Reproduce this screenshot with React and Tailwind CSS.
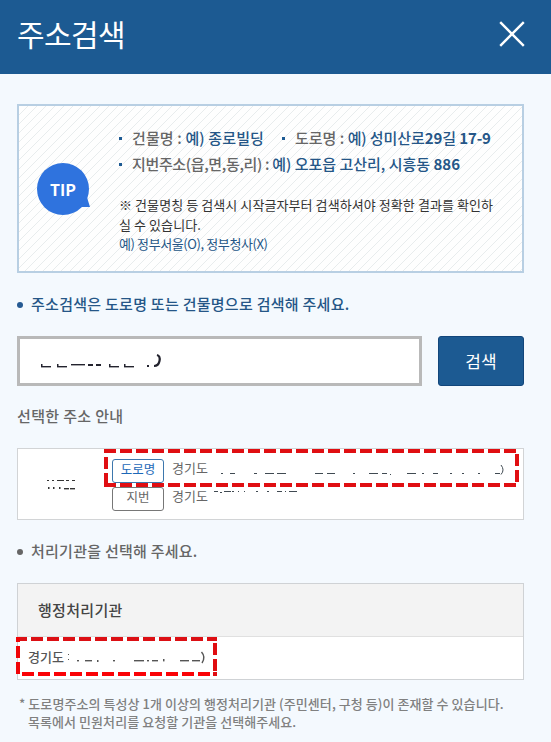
import React from 'react';

const INK = '#404a52';

function CloseIcon() {
  return (
    <svg width="26" height="26" viewBox="0 0 26 26" fill="none" stroke="#fff" strokeWidth="2.4">
      <path d="M1.2 1.2 24.8 24.8M24.8 1.2 1.2 24.8" />
    </svg>
  );
}

function Stripes() {
  return (
    <svg className="absolute inset-0 h-full w-full" aria-hidden="true">
      <defs>
        <pattern id="stripes" width="9" height="9" patternUnits="userSpaceOnUse">
          <path d="M-1 10 10 -1M-1 1 1 -1M8 10 10 8" stroke="#e8eced" strokeWidth="1" />
        </pattern>
      </defs>
      <rect width="100%" height="100%" fill="url(#stripes)" />
    </svg>
  );
}

function TipBadge() {
  return (
    <div className="relative h-[52px] w-[53px] shrink-0">
      <svg className="absolute inset-0" width="53" height="52" viewBox="0 0 53 52" fill="#2f73de">
        <circle cx="26" cy="26" r="26" />
        <path d="M50 34.5 53 44 40 44z" />
      </svg>
      <span className="absolute inset-0 flex items-center justify-center pr-px text-[16px] leading-none font-bold text-white">
        TIP
      </span>
    </div>
  );
}

function Square() {
  return <i className="block h-[3px] w-[3px] shrink-0 bg-[#1d5a93]" />;
}

function Dot({ className }) {
  return <i className={'block h-[6px] w-[6px] shrink-0 rounded-full ' + className} />;
}

/* Strokes left over from masked text: [x, y, width, height] */
function Marks({ marks, width, height, color = INK, children }) {
  return (
    <svg width={width} height={height} fill={color} className="block shrink-0">
      {marks.map(([x, y, w, h], i) => (
        <rect key={i} x={x} y={y} width={w} height={h} />
      ))}
      {children}
    </svg>
  );
}

function Tag({ className, children }) {
  return (
    <span className={'flex h-[24px] w-[52px] shrink-0 items-center justify-center rounded-[3px] border bg-white pb-[4px] text-[12.5px] leading-none ' + className}>
      {children}
    </span>
  );
}

export default function App() {
  return (
    <div className="h-[742px] w-[551px] overflow-hidden bg-[#f4f9fe] font-['Noto_Sans_CJK_KR',sans-serif] whitespace-nowrap">
      <header className="flex h-[74px] items-center justify-between bg-[#1c5a92] pr-[26px] pb-[6px] pl-[17px]">
        <h1 className="pb-[2px] text-[30px] leading-[40px] font-normal tracking-[-0.6px] text-white">주소검색</h1>
        <CloseIcon />
      </header>

      <main className="flex flex-col pr-[27px] pl-[17px]">
        <section className="relative mt-[30px] flex h-[169px] border-2 border-[#b8cfe3] bg-[#fefefe]">
          <Stripes />
          <div className="relative flex pl-[18px]">
            <div className="pt-[57px]">
              <TipBadge />
            </div>
            <div className="pt-[19px] pl-[29px]">
              <div className="flex h-[26px] items-center text-[15px] font-medium text-[#666]">
                <Square />
                <span className="ml-[10px] w-[134px] tracking-[0.13px]">건물명 : <b className="font-medium text-[#255687]">예) 종로빌딩</b></span>
                <span className="ml-[16px]"><Square /></span>
                <span className="ml-[10px]">도로명 : <b className="font-medium tracking-[-0.1px] text-[#255687]">예) 성미산로<b>29</b>길 <b>17-9</b></b></span>
              </div>
              <div className="flex h-[26px] items-center text-[15px] font-medium text-[#666]">
                <Square />
                <span className="ml-[10px] tracking-[-0.35px]">지번주소(읍,면,동,리) : <b className="font-medium tracking-[0px] text-[#255687]">예) 오포읍 고산리, 시흥동 <b>886</b></b></span>
              </div>
              <div className="mt-[18px] text-[13px] leading-[19.5px] tracking-[0.08px] text-[#333]">
                <p>※ 건물명칭 등 검색시 시작글자부터 검색하셔야 정확한 결과를 확인하</p>
                <p>실 수 있습니다.</p>
                <p className="tracking-[-0.4px] text-[#255687]">예) 정부서울(O), 정부청사(X)</p>
              </div>
            </div>
          </div>
        </section>

        <div className="mt-[19px] flex h-[24px] items-center gap-[8px] text-[15px] font-medium tracking-[0.27px] text-[#255687]">
          <Dot className="mt-[2px] bg-[#255a93]" />
          <span>주소검색은 도로명 또는 건물명으로 검색해 주세요.</span>
        </div>

        <div className="mt-[20px] flex h-[50px] gap-[16px]">
          <div className="w-[405px] border-[3px] border-[#b9b9b9] bg-white pt-[14px] pl-[20px]">
            <Marks
              width={130}
              height={18}
              color="#23232e"
              marks={[
                [1, 11, 1.5, 3], [1, 13, 10, 1.4], [17, 11, 1.5, 3], [17, 13, 10, 1.4],
                [31, 11, 14, 1.4], [48, 11, 5, 2], [56, 11, 5, 2],
                [69, 11, 1.5, 3], [69, 13, 10, 1.4], [84, 11, 1.5, 3], [84, 13, 10, 1.4],
                [107, 12, 2, 2],
              ]}
            >
              <path d="M117 2Q120.500 3 119.500 8Q118.500 13 114 13" fill="none" stroke="#23232e" strokeWidth="2.2" />
            </Marks>
          </div>
          <button className="w-[86px] rounded-[3px] border border-[#12467b] bg-[#1c5a92] pb-[2px] text-[17px] leading-none text-white">
            검색
          </button>
        </div>

        <h2 className="mt-[18px] h-[24px] text-[15px] leading-[24px] font-medium tracking-[0.35px] text-[#666]">선택한 주소 안내</h2>

        <section className="relative mt-[20px] flex h-[72px] border border-[#d2d4d6] bg-white">
          <div className="w-[94px] pt-[29px] pl-[28px]">
            <Marks
              width={40}
              height={14}
              color="#333"
              marks={[
                [1, 2, 2, 1], [6, 2, 2, 1], [11, 2, 7, 1], [20, 2, 3, 1], [26, 2, 3, 1],
                [2, 9, 1.5, 2], [7, 9, 1.5, 2], [13, 9, 1.5, 2], [18, 10, 5, 1.4], [24, 10, 5, 1.4],
              ]}
            />
          </div>
          <div className="flex flex-col gap-[4px] pt-[10px]">
            <div className="flex h-[24px] gap-[8px] text-[13px] leading-[18px] text-[#666]">
              <Tag className="border-[#3d77ad] text-[#1c68b8]">도로명</Tag>
              <span className="w-[37px]">경기도</span>
              <Marks
                width={296}
                height={18}
                marks={[
                  [4, 14, 2, 1], [13, 14, 5, 1], [37, 14, 3, 1], [48, 14, 9, 1], [60, 14, 9, 1],
                  [98, 14, 8, 1], [110, 14, 8, 1], [136, 14, 2, 1], [152, 14, 9, 1],
                  [165, 14, 5, 1], [173, 15, 1, 1], [190, 14, 9, 1], [205, 14, 2, 1],
                  [216, 14, 5, 1], [233, 14, 2, 1], [245, 14, 2, 1], [261, 14, 2, 1], [278, 14, 5, 1],
                ]}
              >
                <path d="M284 6Q288 11 284 15.500" fill="none" stroke={INK} />
              </Marks>
            </div>
            <div className="flex h-[24px] gap-[8px] text-[13px] leading-[18px] text-[#666]">
              <Tag className="border-[#777] text-[#666]">지번</Tag>
              <span className="w-[33px]">경기도</span>
              <Marks
                width={110}
                height={10}
                marks={[[1, 4, 4, 1], [7, 5, 2, 1], [11, 4, 7, 1], [19, 4, 2, 1], [25, 4, 1, 1], [31, 4, 1, 1], [43, 4, 2, 1], [54, 4, 2, 1], [64, 4, 5, 1], [72, 4, 1, 1], [76, 4, 8, 1]]}
              />
            </div>
          </div>
          <svg className="absolute top-0 left-[86px]" width="415" height="38" fill="none" stroke="#e00e12" strokeWidth="4">
            <path d="M0 2H412M0 36H412" strokeDasharray="12 4" />
            <path d="M2 0V4M2 8V20M2 24V38M413 5V17M413 21V33" />
          </svg>
        </section>

        <div className="mt-[19px] flex h-[24px] items-center gap-[8px] text-[15px] font-medium tracking-[0.25px] text-[#666]">
          <Dot className="mt-[2px] bg-[#666]" />
          <span>처리기관을 선택해 주세요.</span>
        </div>

        <section className="relative mt-[20px] h-[97px] border border-[#cfd2d5] bg-white">
          <h3 className="h-[53px] border-b border-[#e0e0e0] bg-[#f3f3f3] pl-[20px] text-[15px] leading-[51px] font-medium tracking-[0.3px] text-[#444]">행정처리기관</h3>
          <div className="flex pt-[10px] pl-[10px] text-[13px] leading-[20px] font-medium text-[#555]">
            <span className="w-[37px]">경기도</span>
            <Marks
              width={146}
              height={20}
              color="#555"
              marks={[
                [3, 7, 1, 1], [3, 12, 1, 1], [12, 13, 2, 1.4], [20, 13, 7, 1.4], [32, 13, 1.5, 2], [48, 13, 2, 1.4],
                [69, 13, 10, 1.4], [82, 13, 2, 1.4], [87, 13, 6, 1.4], [98, 12, 1.5, 2.4], [115, 13, 9, 1.4], [127, 13, 8, 1.4],
              ]}
            >
              <path d="M136.500 5Q141 10 137 16" fill="none" stroke="#555" strokeWidth="1.4" />
            </Marks>
          </div>
          <svg className="absolute top-[53px] left-[-2px]" width="201" height="39" fill="none" strokeWidth="4">
            <path d="M-1 2H201" strokeDasharray="12 4" stroke="#dc0f14" />
            <path d="M6 37H196" strokeDasharray="12 4" stroke="#fa0206" />
            <path d="M2 0V5M2 9V21M2 25V37" stroke="#f00508" />
            <path d="M199 0V2M199 6V18M199 22V34M197 37H201" stroke="#e00c10" />
          </svg>
        </section>

        <div className="mt-[15px] text-[13px] leading-[18px] font-medium tracking-[0.06px] text-[#808080]">
          <p className="pl-[2px]">* 도로명주소의 특성상 1개 이상의 행정처리기관 (주민센터, 구청 등)이 존재할 수 있습니다.</p>
          <p className="pl-[11px]">목록에서 민원처리를 요청할 기관을 선택해주세요.</p>
        </div>
      </main>
    </div>
  );
}
